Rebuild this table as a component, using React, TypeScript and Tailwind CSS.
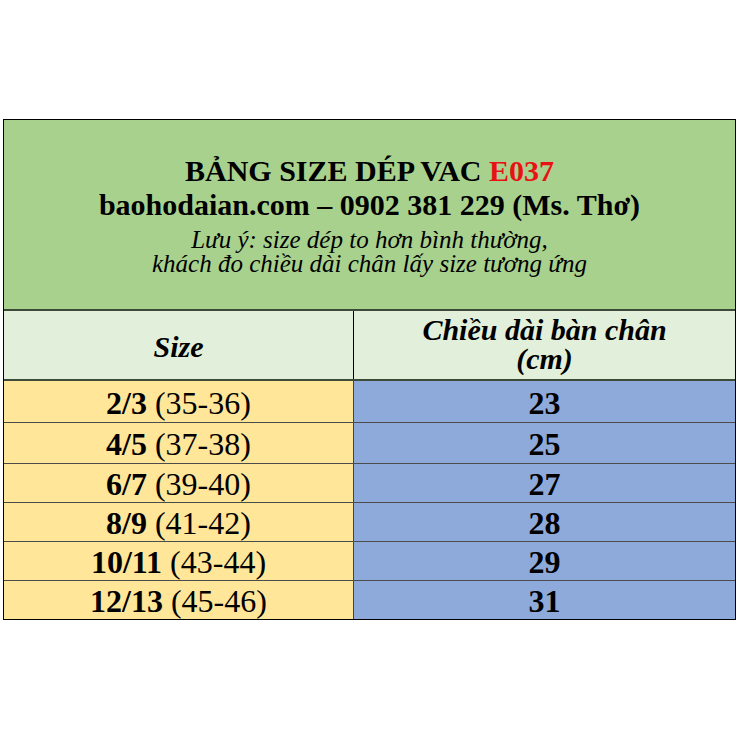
const rows = [
  { size: "2/3", eu: "(35-36)", len: "23", h: "h-[42px]" },
  { size: "4/5", eu: "(37-38)", len: "25", h: "h-[41px]" },
  { size: "6/7", eu: "(39-40)", len: "27", h: "h-[39px]" },
  { size: "8/9", eu: "(41-42)", len: "28", h: "h-[39px]" },
  { size: "10/11", eu: "(43-44)", len: "29", h: "h-[39px]" },
  { size: "12/13", eu: "(45-46)", len: "31", h: "h-[38px]" },
];

export default function App() {
  return (
    <div className="w-[740px] h-[740px] bg-white pt-[119px] pl-[3px] font-['Liberation_Serif',serif] text-black">
      <div className="w-[733px] border border-black">
        {/* Title block */}
        <div className="h-[191px] bg-[#a9d18e] border-b-2 border-[#3e4a38] flex flex-col items-center justify-center text-center">
          <p className="text-[30px] leading-[34px] font-bold">
            BẢNG SIZE DÉP VAC <span className="text-[#e81212]">E037</span>
          </p>
          <p className="text-[30px] leading-[34px] font-bold">
            baohodaian.com – 0902 381 229 (Ms. Thơ)
          </p>
          <p className="mt-[6px] text-[25px] leading-[24px] italic">
            Lưu ý: size dép to hơn bình thường,
          </p>
          <p className="text-[25px] leading-[24px] italic">
            khách đo chiều dài chân lấy size tương ứng
          </p>
        </div>

        {/* Column headers */}
        <div className="grid grid-cols-[350px_1fr] h-[70px] bg-[#e2efda] border-b-2 border-[#3e4a38] text-[30px] font-bold italic">
          <div className="flex items-center justify-center border-r border-black pt-[2px]">
            Size
          </div>
          <div className="flex flex-col items-center justify-center leading-[29px] pb-[2px]">
            <span>Chiều dài bàn chân</span>
            <span>(cm)</span>
          </div>
        </div>

        {/* Size rows */}
        {rows.map((r, i) => (
          <div
            key={r.size}
            className={`grid grid-cols-[350px_1fr] ${r.h} ${
              i < rows.length - 1 ? "border-b border-black/70" : ""
            } text-[32px] leading-[32px]`}
          >
            <div className="flex items-center justify-center bg-[#ffe699] border-r border-black/70 pt-[2px]">
              <span>
                <b>{r.size}</b> {r.eu}
              </span>
            </div>
            <div className="flex items-center justify-center bg-[#8eaadb] font-bold pt-[2px]">
              {r.len}
            </div>
          </div>
        ))}
      </div>
    </div>
  );
}
